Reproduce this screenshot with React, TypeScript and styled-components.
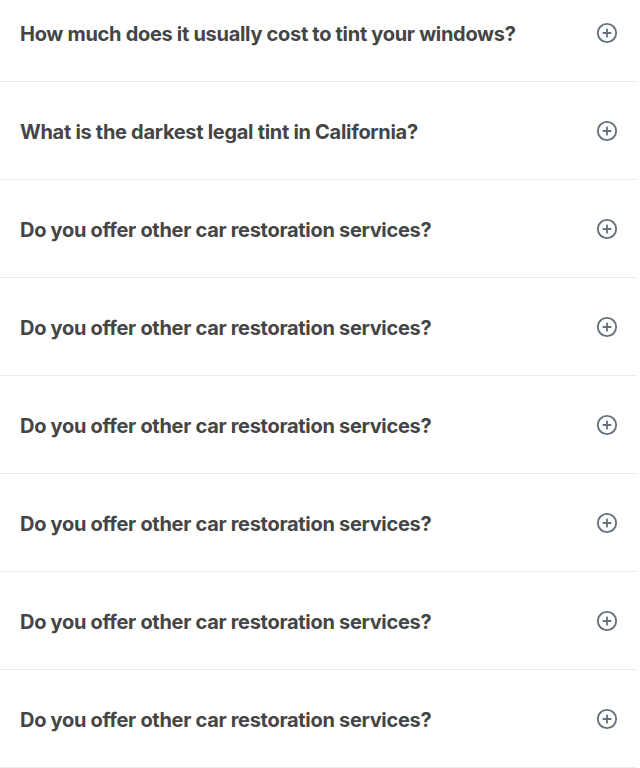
import React from "react";
import styled, { createGlobalStyle } from "styled-components";
import { CirclePlus } from "lucide-react";

const Global = createGlobalStyle`
  html, body { margin: 0; padding: 0; background: #ffffff; }
  body { font-family: Inter, "Noto Sans", sans-serif; overflow: hidden; }
`;

const List = styled.div`
  display: flex;
  flex-direction: column;
  width: 637px;
  margin-top: -16px;
`;

const Row = styled.div`
  display: flex;
  align-items: center;
  justify-content: space-between;
  height: 97px;
  padding: 0 19px 0 20px;
  border-bottom: 1px solid #ebebeb;
  box-sizing: content-box;
`;

const Question = styled.h3`
  margin: 0;
  padding-top: 2px;
  font-family: Inter, "Noto Sans", sans-serif;
  font-size: 20px;
  font-weight: 700;
  letter-spacing: -0.3px;
  color: #454545;
`;

const IconWrap = styled.span`
  display: flex;
  color: #64707f;
`;

const questions = [
  "How much does it usually cost to tint your windows?",
  "What is the darkest legal tint in California?",
  "Do you offer other car restoration services?",
  "Do you offer other car restoration services?",
  "Do you offer other car restoration services?",
  "Do you offer other car restoration services?",
  "Do you offer other car restoration services?",
  "Do you offer other car restoration services?",
];

export default function App() {
  return (
    <>
      <Global />
      <List>
        {questions.map((q, i) => (
          <Row key={i}>
            <Question>{q}</Question>
            <IconWrap>
              <CirclePlus size={22} strokeWidth={2} />
            </IconWrap>
          </Row>
        ))}
      </List>
    </>
  );
}
